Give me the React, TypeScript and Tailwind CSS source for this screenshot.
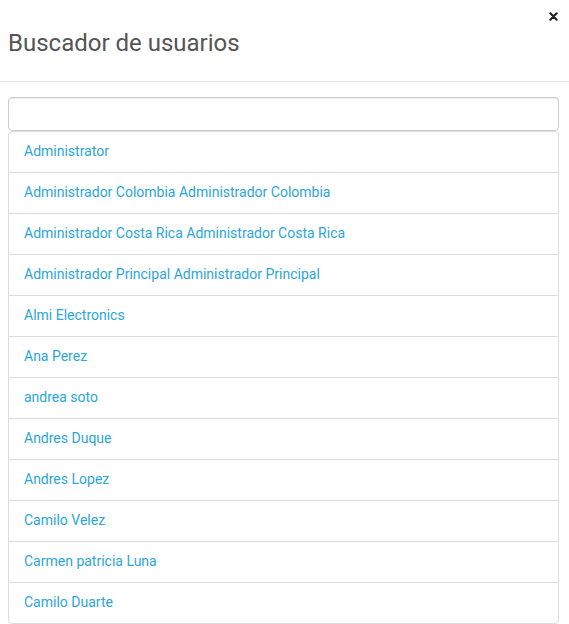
const users = [
  'Administrator',
  'Administrador Colombia Administrador Colombia',
  'Administrador Costa Rica Administrador Costa Rica',
  'Administrador Principal Administrador Principal',
  'Almi Electronics',
  'Ana Perez',
  'andrea soto',
  'Andres Duque',
  'Andres Lopez',
  'Camilo Velez',
  'Carmen patricia Luna',
  'Camilo Duarte',
]

export default function App() {
  return (
    <div className="w-[569px] h-[624px] overflow-hidden bg-white font-['Roboto',sans-serif]">
      {/* Header */}
      <div className="relative h-[82px] border-b border-[#e5e5e5] pl-2 pt-[26px]">
        <button className="absolute right-[11px] top-[12px] text-[#222]">
          <svg width="9" height="9" viewBox="0 0 10 10">
            <path d="M1.5 1.5 L8.5 8.5 M8.5 1.5 L1.5 8.5" stroke="currentColor" strokeWidth="2.4" strokeLinecap="round" />
          </svg>
        </button>
        <h4 className="text-[24px] leading-[34px] text-[#555]">Buscador de usuarios</h4>
      </div>

      {/* Body */}
      <div className="pl-2 pt-[15px] w-[559px]">
        <input
          type="text"
          className="block w-full h-[34px] rounded border border-[#ccc] shadow-[inset_0_1px_1px_rgba(0,0,0,0.075)] px-3 text-sm outline-none"
        />
        <ul>
          {users.map((name, i) => (
            <li
              key={i}
              className="h-[42px] border border-[#ddd] -mt-px first:mt-0 first:rounded-t last:rounded-b px-[15px] pb-[2px] flex items-center"
            >
              <a className="text-[14px] text-[#2ba6d9] cursor-pointer">{name}</a>
            </li>
          ))}
        </ul>
      </div>
    </div>
  )
}
